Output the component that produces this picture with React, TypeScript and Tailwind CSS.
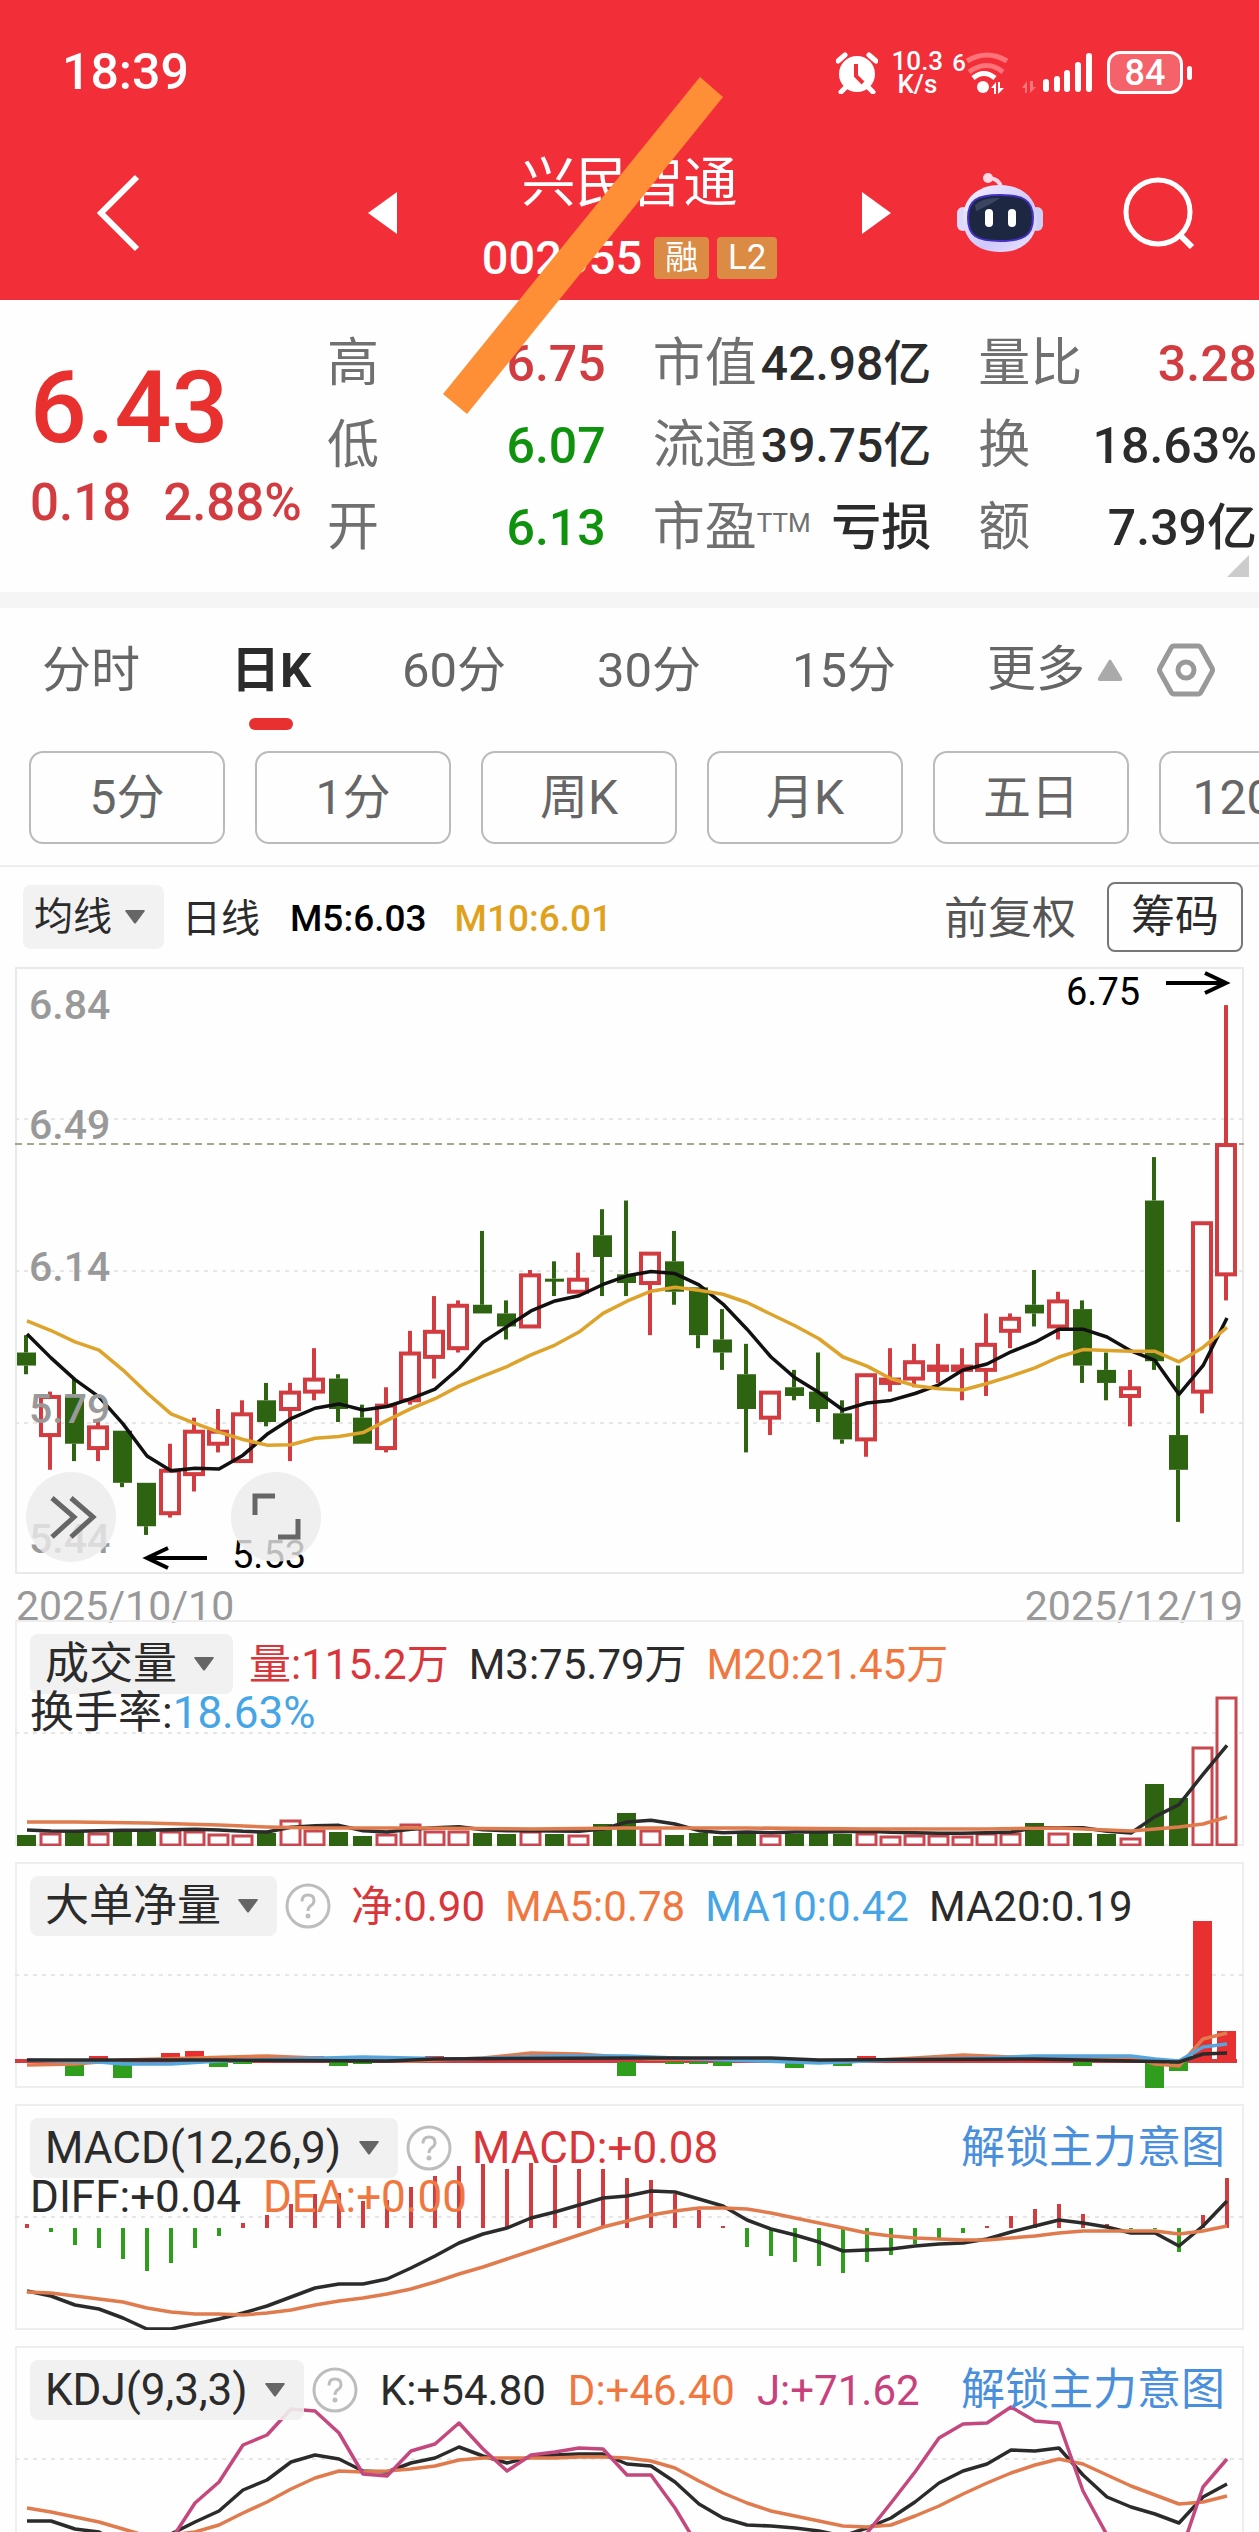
import React from 'react';

// [open, close, high, low]
const candles: number[][] = [
  [5.95, 5.92, 5.99, 5.9], [5.76, 5.85, 5.86, 5.68], [5.85, 5.74, 5.89, 5.7], [5.73, 5.78, 5.79, 5.7],
  [5.77, 5.65, 5.77, 5.64], [5.65, 5.55, 5.65, 5.53], [5.58, 5.68, 5.74, 5.57], [5.67, 5.77, 5.8, 5.63],
  [5.74, 5.77, 5.82, 5.72], [5.7, 5.81, 5.84, 5.7], [5.84, 5.79, 5.88, 5.78], [5.82, 5.86, 5.88, 5.7],
  [5.86, 5.89, 5.96, 5.84], [5.89, 5.82, 5.9, 5.79], [5.8, 5.74, 5.83, 5.74], [5.73, 5.83, 5.87, 5.72],
  [5.84, 5.95, 6.0, 5.83], [5.94, 6.0, 6.08, 5.89], [5.96, 6.06, 6.07, 5.95], [6.06, 6.04, 6.23, 6.04],
  [6.04, 6.01, 6.07, 5.98], [6.01, 6.13, 6.14, 6.01], [6.12, 6.115, 6.16, 6.08], [6.09, 6.12, 6.18, 6.09],
  [6.22, 6.17, 6.28, 6.08], [6.13, 6.11, 6.3, 6.08], [6.11, 6.18, 6.18, 5.99], [6.16, 6.09, 6.23, 6.06],
  [6.1, 5.99, 6.1, 5.96], [5.98, 5.95, 6.05, 5.91], [5.9, 5.82, 5.97, 5.72], [5.8, 5.86, 5.86, 5.76],
  [5.87, 5.85, 5.91, 5.84], [5.86, 5.82, 5.95, 5.79], [5.81, 5.75, 5.84, 5.74], [5.75, 5.9, 5.9, 5.71],
  [5.88, 5.89, 5.96, 5.86], [5.89, 5.93, 5.97, 5.87], [5.91, 5.92, 5.97, 5.88], [5.91, 5.92, 5.96, 5.84],
  [5.91, 5.97, 6.04, 5.85], [6.0, 6.03, 6.04, 5.96], [6.06, 6.04, 6.14, 6.01], [6.01, 6.07, 6.09, 5.98],
  [6.05, 5.92, 6.07, 5.88], [5.91, 5.88, 5.95, 5.84], [5.85, 5.87, 5.91, 5.78], [6.3, 5.93, 6.4, 5.91],
  [5.76, 5.68, 5.92, 5.56], [5.86, 6.25, 6.25, 5.81], [6.13, 6.43, 6.75, 6.07],
];

const volumes = [
  11, 13, 14, 13, 14, 14, 15, 15, 12, 11, 13, 26, 16, 14, 10, 12, 22, 15, 15, 13, 12, 15, 12, 11, 22, 33,
  16, 11, 13, 10, 13, 11, 12, 13, 12, 13, 10, 11, 11, 10, 13, 13, 23, 13, 13, 12, 8, 62, 48, 99, 149,
];

const volumeM20: number[][] = [
  [0, 202], [2, 202], [5, 203], [8, 205], [10, 207], [12, 208], [16, 208], [21, 209], [25, 208], [30, 208],
  [35, 209], [40, 209], [43, 208], [46, 211], [47, 209], [48, 207], [49, 204], [50, 197],
];

// index -> net amount, only the days that have a visible bar
const netBars: number[][] = [
  [2, -14], [3, 6], [4, -16], [6, 9], [7, 11], [8, -5], [9, -2], [12, 6], [13, -4], [14, -2], [17, 6],
  [25, -14], [27, -2], [28, -2], [29, -4], [32, -6], [33, -2], [34, -4], [35, 6], [42, 7], [44, -4],
  [47, -26], [48, -9], [49, 141], [50, 31],
];
const netMa5: number[][] = [
  [0, 203], [2, 202], [4, 198], [7, 196], [10, 194], [13, 197], [16, 199], [19, 196], [21, 191], [23, 192],
  [26, 197], [30, 197], [34, 200], [37, 196], [39, 193], [41, 195], [43, 196], [46, 195], [47, 202], [48, 204],
  [49, 177], [50, 171],
];
const netMa10: number[][] = [
  [0, 198], [3, 200], [4, 202], [6, 202], [8, 199], [14, 195], [18, 197], [22, 194], [25, 194], [28, 197],
  [33, 201], [36, 198], [40, 196], [42, 194], [46, 194], [47, 197], [48, 199], [49, 185], [50, 182],
];
const netMa20: number[][] = [
  [0, 198], [8, 198], [15, 199], [17, 197], [25, 196], [31, 196], [33, 198], [42, 197], [48, 200], [49, 192], [50, 191],
];

const macd = [
  4, -4, -17, -20, -31, -43, -35, -20, -8, 5, 13, 24, 34, 35, 27, 28, 41, 52, 62, 64, 59, 65, 63, 59, 59, 50,
  48, 34, 18, 2, -19, -28, -34, -38, -45, -34, -27, -16, -10, -5, 2, 12, 19, 24, 14, 4, -1, -1, -24, 13, 50,
];
const diff = [
  187, 192, 201, 205, 214, 225, 225, 220, 215, 209, 202, 193, 184, 180, 180, 175, 164, 152, 139, 130, 124, 114,
  108, 101, 94, 92, 87, 88, 95, 102, 116, 125, 131, 138, 147, 146, 145, 142, 140, 139, 135, 128, 122, 116, 119,
  123, 129, 129, 142, 122, 97,
];
const dea = [
  188, 189, 192, 195, 198, 204, 208, 210, 210, 211, 209, 206, 201, 197, 194, 190, 185, 178, 170, 163, 155, 147,
  139, 131, 123, 117, 111, 107, 104, 104, 105, 109, 114, 119, 124, 129, 132, 134, 135, 136, 136, 134, 132, 129,
  127, 127, 127, 127, 130, 127, 122,
];

const kLine = [
  175, 175, 183, 186, 200, 205, 188, 176, 165, 144, 134, 116, 109, 113, 125, 126, 117, 112, 101, 110, 117, 111,
  109, 108, 108, 118, 120, 136, 158, 172, 179, 180, 182, 185, 190, 182, 172, 156, 137, 125, 118, 104, 105, 102,
  129, 151, 161, 168, 177, 151, 138,
];
const dLine = [
  162, 166, 171, 176, 183, 190, 189, 186, 179, 167, 156, 143, 132, 125, 126, 125, 123, 120, 114, 112, 112, 112,
  112, 111, 111, 112, 115, 122, 135, 147, 157, 165, 170, 175, 180, 181, 179, 170, 160, 148, 137, 127, 119, 113,
  118, 129, 140, 149, 158, 156, 150,
];
const jLine = [
  215, 215, 225, 235, 245, 225, 194, 157, 136, 99, 89, 63, 65, 87, 128, 130, 105, 98, 77, 103, 125, 109, 106,
  102, 103, 129, 129, 162, 202, 220, 225, 225, 225, 220, 215, 187, 157, 126, 92, 78, 77, 61, 75, 77, 145, 189,
  205, 215, 212, 141, 113,
];

const DARK_GREEN = '#2e6411';
const GREEN = '#2f9e1c';
const RED = '#e83030';
const CANDLE_RED = '#d23c40';
const ORANGE = '#e07b4e';
const BLACK = '#2b2b2b';

const xAt = (i: number) => 11 + i * 24;
const priceY = (p: number) => (6.84 - p) * 434.3;

const average = (values: number[], n: number, head: number[]) =>
  values.map((_, i) =>
    i < head.length ? head[i] : values.slice(i - n + 1, i + 1).reduce((a, b) => a + b, 0) / n
  );

const closes = candles.map((c) => c[1]);
const ma5 = average(closes, 5, [5.995, 5.94, 5.89, 5.85]);
const ma10 = average(closes, 10, [6.025, 6.003, 5.977, 5.958, 5.912, 5.859, 5.811, 5.789, 5.769]);
const volumeM3 = average(volumes, 3, [14, 13]);

function Line({ ys, points, color }: { ys?: number[]; points?: number[][]; color: string }) {
  const list = points || (ys || []).map((y, i) => [i, y]);
  return (
    <polyline
      points={list.map(([i, y]) => `${xAt(i) + 1},${y}`).join(' ')}
      fill="none"
      stroke={color}
      strokeWidth="3.500"
      strokeLinejoin="round"
    />
  );
}

function GridLine({ y }: { y: number }) {
  return <line x1="0" x2="1229" y1={y} y2={y} stroke="#e6e6e6" strokeWidth="2" strokeDasharray="4 5" />;
}

function Caret() {
  return (
    <svg width="22" height="16" viewBox="0 0 22 16" className="pointer-events-none -ml-[40px] mr-[18px] shrink-0" aria-hidden="true">
      <path d="M2 1h18q1.500 0 .5 1.500L12 14q-1 1-2 0L1.500 2.500Q.5 1 2 1z" fill="#666" />
    </svg>
  );
}

function IndicatorSelect({ name }: { name: string }) {
  return (
    <label className="flex h-[60px] items-center rounded-lg bg-[#f0f0f0]/90">
      <select aria-label={name} className="h-[60px] appearance-none bg-transparent pl-[15px] pr-[56px] text-[44px] leading-[60px] text-[#2b2b2b]">
        <option>{name}</option>
      </select>
      <Caret />
    </label>
  );
}

function Help() {
  return (
    <button type="button" aria-label="说明" className="ml-2 size-[46px] shrink-0">
      <svg viewBox="0 0 46 46" fill="none" stroke="#bdbdbd" strokeWidth="3">
        <circle cx="23" cy="23" r="21" />
        <path d="M17 18.500q0-6.500 6-6.500t6 5.500q0 3-3 5t-3 5.500" />
        <circle cx="23" cy="33" r="1" fill="#bdbdbd" />
      </svg>
    </button>
  );
}

function UnlockLink() {
  return (
    <a href="#unlock" className="ml-auto text-[44px] text-[#4a8fdc]">
      解锁主力意图
    </a>
  );
}

function Panel({ children, legend, second, height }: { children: React.ReactNode; legend: React.ReactNode; second?: React.ReactNode; height: number }) {
  return (
    <section className={`relative mx-[15px] border-x-2 border-t-2 border-[#eee] ${height > 200 ? 'border-b-2' : ''}`}>
      <svg viewBox={`0 0 1229 ${height}`} className="-mx-[2px] -my-[2px] block w-[calc(100%+4px)]">
        {children}
      </svg>
      <div className="absolute inset-x-0 top-[12px] pl-[13px] pr-[17px]">
        <div className="flex h-[60px] items-center whitespace-nowrap text-[42px]">{legend}</div>
        {second && <div className="flex h-[38px] items-center gap-[22px] whitespace-nowrap text-[44px] leading-none">{second}</div>}
      </div>
    </section>
  );
}

function Stat({ label, value, color = 'text-[#2b2b2b]', size = 'text-[50px]' }: { label: React.ReactNode; value: string; color?: string; size?: string }) {
  return (
    <div className="flex h-[82px] items-center justify-between whitespace-nowrap">
      <dt className="text-[52px] text-[#707070]">{label}</dt>
      <dd className={`font-medium ${size} ${color}`}>{value}</dd>
    </div>
  );
}

function StatusBar() {
  return (
    <div className="flex h-[145px] items-center pl-[62px] pr-[67px]">
      <span className="text-[50px] font-medium">18:39</span>
      <div className="ml-auto flex items-center">
        <svg width="42" height="42" viewBox="0 0 42 42" aria-hidden="true">
          <circle cx="21" cy="22" r="18" fill="#fff" />
          <path d="M2 9 9 3M33 3l7 6M5 40l6-6M37 40l-6-6" stroke="#fff" strokeWidth="5" strokeLinecap="round" />
          <path d="M20 12v12l7 7" fill="none" stroke="#f22e38" strokeWidth="4" />
        </svg>
        <span className="ml-3 w-[54px] text-center text-[26px] font-medium leading-[23px]">
          10.3 K/s
        </span>
        <span className="mb-5 ml-2 text-[24px] font-medium leading-none">6</span>
        <svg width="44" height="42" viewBox="0 0 44 42" fill="none" strokeWidth="5" className="-ml-px" aria-hidden="true">
          <path d="M2 9Q22-3 42 9" stroke="#ff7478" />
          <path d="M4 20q18-13 34 0" stroke="#ff7478" />
          <path d="M8 26q11-9 22 0" stroke="#fff" />
          <circle cx="18" cy="35" r="6" fill="#fff" />
          <path d="m26 36 5-6v12h-2v-6zM33 30v12l6-6h-4v-6z" fill="#fff" />
        </svg>
        <svg width="72" height="42" viewBox="0 0 72 42" className="ml-[12px]" aria-hidden="true">
          <path d="m1 36 5-7v12H4v-5zM9 29v12l6-6h-3v-6z" fill="#ff7478" />
          <path d="M25 30v7M36 27v10M46 21v16M57 13v24M68 4v33" stroke="#fff" strokeWidth="6" strokeLinecap="round" />
        </svg>
        <div className="ml-[14px] flex h-[43px] w-[76px] items-center justify-center rounded-[13px] border-3 border-white bg-white/25 text-[36px] font-medium leading-none">
          84
        </div>
        <div className="ml-1 h-[14px] w-[5px] rounded-full bg-white" />
      </div>
    </div>
  );
}

function Robot() {
  return (
    <svg width="86" height="80" viewBox="0 0 86 80">
      <defs>
        <linearGradient id="shell" x1="0" y1="0" x2="1" y2="1">
          <stop offset="0" stopColor="#f4f2ff" />
          <stop offset=".6" stopColor="#cfc8fb" />
          <stop offset="1" stopColor="#e9e6ff" />
        </linearGradient>
      </defs>
      <path d="M44 15q-1-9-12-10" fill="none" stroke="#ffd3e2" strokeWidth="4" />
      <circle cx="31" cy="5" r="5" fill="#ffdbe6" />
      <rect x="0" y="34" width="12" height="24" rx="6" fill="#dcd9fb" />
      <rect x="74" y="34" width="12" height="24" rx="6" fill="#cdd0f5" />
      <path d="M43 12c22 0 37 13 37 33S67 79 43 79 6 65 6 45s15-33 37-33z" fill="url(#shell)" />
      <path d="M43 22c23 0 33 5 33 23s-10 23-33 23-32-5-32-23 9-23 32-23z" fill="#1d2742" stroke="#4431c4" strokeWidth="2" />
      <path d="M18 32q8-8 25-7-8 6-24 13z" fill="#3b4560" />
      <rect x="28" y="36" width="8" height="18" rx="4" fill="#fff" />
      <rect x="51" y="36" width="8" height="18" rx="4" fill="#fff" />
    </svg>
  );
}

function Header() {
  return (
    <header className="h-[300px] bg-[#f22e38] text-white">
      <StatusBar />
      <nav className="grid h-[136px] grid-cols-[1fr_523px_1fr] grid-rows-[136px] items-center">
        <button type="button" aria-label="返回" className="ml-[95px] w-[46px]">
          <svg width="46" height="78" viewBox="0 0 46 78" fill="none" stroke="#fff" strokeWidth="6">
            <path d="M42 3 6 39l36 36" />
          </svg>
        </button>
        <div className="flex items-center justify-between">
          <button type="button" aria-label="上一只">
            <svg width="29" height="42" viewBox="0 0 29 42"><path d="M29 0v42L0 21z" fill="#fff" /></svg>
          </button>
          <div className="pt-4 text-center">
            <h1 className="text-[54px] leading-[74px]">兴民智通</h1>
            <div className="flex items-center gap-2 text-[47px] leading-[74px]">
              <span className="mr-1 font-medium">002355</span>
              <span className="flex h-[42px] w-[55px] items-center justify-center rounded bg-[#dc8b45] text-[33px]">融</span>
              <span className="flex h-[42px] w-[60px] items-center justify-center rounded bg-[#dc8b45] text-[35px]">L2</span>
            </div>
          </div>
          <button type="button" aria-label="下一只">
            <svg width="29" height="42" viewBox="0 0 29 42"><path d="M0 0v42l29-21z" fill="#fff" /></svg>
          </button>
        </div>
        <div className="flex items-center justify-end gap-[80px] pr-[64px]">
          <button type="button" aria-label="助手"><Robot /></button>
          <button type="button" aria-label="搜索">
            <svg width="72" height="72" viewBox="0 0 72 72" fill="none" stroke="#fff" strokeWidth="5">
              <circle cx="35" cy="35" r="32" />
              <path d="m57 58 12 12" strokeWidth="6" />
            </svg>
          </button>
        </div>
      </nav>
      {/* marker stroke across the title */}
      <svg width="280" height="337" viewBox="0 0 280 337" className="pointer-events-none absolute left-[443px] top-[77px] z-10" aria-hidden="true">
        <path d="M257 0 280 20 24 337 0 317z" fill="#ff8f36" />
      </svg>
    </header>
  );
}

function Quote() {
  return (
    <section className="relative grid h-[292px] grid-cols-[250px_1fr_1fr_1fr] items-start gap-x-[47px] pl-[30px] pr-[2px] pt-[23px]">
      <div className="whitespace-nowrap pt-[35px] font-medium">
        <p className="text-[100px] leading-[100px] text-[#e8302f]">6.43</p>
        <p className="flex gap-[32px] text-[51px] leading-[90px] text-[#d23c40]">
          <span>0.18</span>
          <span>2.88%</span>
        </p>
      </div>
      <dl>
        <Stat label="高" value="6.75" color="text-[#d23c40]" />
        <Stat label="低" value="6.07" color="text-[#0f930f]" />
        <Stat label="开" value="6.13" color="text-[#0f930f]" />
      </dl>
      <dl>
        <Stat label="市值" value="42.98亿" size="text-[48px]" />
        <Stat label="流通" value="39.75亿" size="text-[48px]" />
        <Stat label={<>市盈<sup className="text-[26px]">TTM</sup></>} value="亏损" />
      </dl>
      <dl>
        <Stat label="量比" value="3.28" color="text-[#d23c40]" />
        <Stat label="换" value="18.63%" />
        <Stat label="额" value="7.39亿" />
      </dl>
      <svg width="22" height="22" viewBox="0 0 22 22" className="absolute bottom-[15px] right-[10px]" aria-hidden="true">
        <path d="M22 0v22H0z" fill="#ccc" />
      </svg>
    </section>
  );
}

function Periods() {
  const tabs = ['分时', '日K', '60分', '30分', '15分'];
  const chips = ['5分', '1分', '周K', '月K', '五日', '120分'];
  return (
    <section className="border-b-2 border-[#eee]">
      <div className="flex h-[143px] items-start justify-between pl-[42px] pr-[44px] text-[49px] leading-[126px] text-[#666]">
        {tabs.map((t) => (
          <button key={t} type="button" className={t === '日K' ? 'relative font-bold text-[#2b2b2b]' : ''}>
            {t}
            {t === '日K' && <span className="absolute left-1/2 top-[110px] h-3 w-11 -translate-x-1/2 rounded-full bg-[#e83030]" />}
          </button>
        ))}
        <div className="flex h-[124px] items-center">
          <button type="button" className="flex items-center gap-3">
            更多
            <svg width="26" height="22" viewBox="0 0 26 22"><path d="M12 1q1-1 2 0l11 18q1 3-2 3H3q-3 0-2-3z" fill="#aaa" /></svg>
          </button>
          <button type="button" aria-label="设置" className="ml-[34px]">
            <svg width="58" height="54" viewBox="0 0 58 54" fill="none" stroke="#999" strokeWidth="5" strokeLinejoin="round">
              <path d="M17 3h24q2 0 3 2l11 20q1 2 0 4L44 49q-1 2-3 2H17q-2 0-3-2L3 29q-1-2 0-4L14 5q1-2 3-2z" />
              <circle cx="29" cy="27" r="8" />
            </svg>
          </button>
        </div>
      </div>
      <div className="flex gap-[30px] overflow-hidden pb-[21px] pl-[29px]">
        {chips.map((c) => (
          <button key={c} type="button" className="h-[93px] w-[196px] shrink-0 rounded-[14px] border-2 border-[#bbb] text-[48px] text-[#666]">
            {c}
          </button>
        ))}
      </div>
    </section>
  );
}

function PriceChart() {
  return (
    <section>
      <div className="flex h-[100px] items-center whitespace-nowrap pl-[23px] pr-4 text-[37px] font-medium">
        <label className="flex h-[64px] items-center rounded-lg bg-[#f2f2f2] font-normal">
          <select aria-label="均线" className="appearance-none bg-transparent pl-[11px] pr-[51px] text-[39px] leading-[60px] text-[#2b2b2b]">
            <option>均线</option>
          </select>
          <Caret />
        </label>
        <span className="ml-[18px] pt-1 text-[39px] font-normal text-[#2b2b2b]">日线</span>
        <span className="ml-[30px] pt-1 text-black">M5:6.03</span>
        <span className="ml-[28px] pt-1 text-[#e0a21c]">M10:6.01</span>
        <button type="button" className="ml-auto pt-1 text-[44px] font-normal text-[#555]">前复权</button>
        <button type="button" className="ml-[31px] h-[70px] w-[136px] rounded-lg border-2 border-[#777] text-[44px] font-normal leading-none text-[#2b2b2b]">筹码</button>
      </div>
      <div className="relative mx-[15px]">
        <svg viewBox="0 0 1229 607" className="block w-full font-medium">
          <rect x="1" y="1" width="1227" height="605" fill="none" stroke="#e9e9e9" strokeWidth="2" />
          {[6.49, 6.14, 5.79].map((p) => <GridLine key={p} y={priceY(p)} />)}
          <line x1="0" x2="1229" y1="177" y2="177" stroke="#a8a68c" strokeWidth="2" strokeDasharray="7 5" />
          {candles.map(([open, close, high, low], i) => {
            const up = close > open;
            const color = up ? CANDLE_RED : DARK_GREEN;
            const top = priceY(Math.max(open, close)) - 1;
            const bottom = priceY(Math.min(open, close)) - 1;
            return (
              <g key={i} stroke={color}>
                <line x1={xAt(i)} x2={xAt(i)} y1={priceY(high) - 1} y2={top} strokeWidth="4" />
                <line x1={xAt(i)} x2={xAt(i)} y1={bottom} y2={priceY(low) - 1} strokeWidth="4" />
                {up
                  ? <rect x={xAt(i) - 9} y={top + 1} width="18" height={Math.max(bottom - top - 1, 2)} fill="#fff" strokeWidth="4" />
                  : <rect x={xAt(i) - 9} y={top} width="19" height={Math.max(bottom - top, 3)} fill={color} stroke="none" />}
              </g>
            );
          })}
          <Line ys={ma5.map(priceY)} color="#111" />
          <Line ys={ma10.map(priceY)} color="#dea32a" />
          <g fontSize="41" fill="#999">
            <text x="14" y="52">6.84</text>
            <text x="14" y="172">6.49</text>
            <text x="14" y="314">6.14</text>
            <text x="14" y="456">5.79</text>
            <text x="14" y="586">5.44</text>
          </g>
          <g fontSize="38" fontWeight="400" fill="#000">
            <text x="1051" y="38">6.75</text>
            <text x="217" y="601">5.53</text>
          </g>
          <path d="M1151 16h60M1190 6l21 10-21 10M192 591h-60M153 581l-21 10 21 10" fill="none" stroke="#000" strokeWidth="4" />
        </svg>
        <div className="absolute bottom-[12px] left-[11px] flex gap-[115px]">
          <button type="button" aria-label="展开" className="size-[90px] rounded-full bg-[#ebebeb]/80">
            <svg viewBox="0 0 90 90" fill="none" stroke="#666" strokeWidth="5"><path d="m26 26 22 19-22 20M45 26l22 19-22 20" /></svg>
          </button>
          <button type="button" aria-label="全屏" className="size-[90px] rounded-full bg-[#ebebeb]/80">
            <svg viewBox="0 0 90 90" fill="none" stroke="#666" strokeWidth="5"><path d="M24 43V24h20M67 47v18H47" /></svg>
          </button>
        </div>
      </div>
      <div className="flex h-[46px] justify-between px-[16px] pt-[12px] text-[41px] leading-[40px] text-[#999]">
        <span>2025/10/10</span>
        <span>2025/12/19</span>
      </div>
    </section>
  );
}

function VolumePanel() {
  return (
    <Panel
      height={226}
      legend={
        <>
          <IndicatorSelect name="成交量" />
          <span className="ml-[16px] text-[#d8363a]">量:115.2万</span>
          <span className="ml-[20px] text-[#2b2b2b]">M3:75.79万</span>
          <span className="ml-[20px] text-[#f07840]">M20:21.45万</span>
        </>
      }
      second={<span className="text-[#2b2b2b]">换手率:<span className="text-[#45a5e5]">18.63%</span></span>}
    >
      <GridLine y={113} />
      {volumes.map((v, i) =>
        candles[i][1] > candles[i][0]
          ? <rect key={i} x={xAt(i) - 9} y={227 - v} width="19" height={v - 2} fill="#fff" stroke="#c9474f" strokeWidth="3" />
          : <rect key={i} x={xAt(i) - 9} y={226 - v} width="19" height={v} fill={DARK_GREEN} />
      )}
      <Line ys={volumeM3.map((v) => 224 - v)} color={BLACK} />
      <Line points={volumeM20} color={ORANGE} />
    </Panel>
  );
}

function NetPanel() {
  return (
    <Panel
      height={226}
      legend={
        <>
          <IndicatorSelect name="大单净量" />
          <Help />
          <span className="ml-[20px] text-[#d8363a]">净:0.90</span>
          <span className="ml-[20px] text-[#f07840]">MA5:0.78</span>
          <span className="ml-[20px] text-[#45a5e5]">MA10:0.42</span>
          <span className="ml-[20px] text-[#2b2b2b]">MA20:0.19</span>
        </>
      }
    >
      <GridLine y={113} />
      <line x1="0" x2="1222" y1="199" y2="199" stroke={CANDLE_RED} strokeWidth="4" />
      {netBars.map(([i, v]) => (
        <rect key={i} x={xAt(i) - 9} y={v > 0 ? 200 - v : 200} width="19" height={Math.abs(v)} fill={v > 0 ? RED : GREEN} />
      ))}
      <Line points={netMa5} color={ORANGE} />
      <Line points={netMa10} color="#55a5de" />
      <Line points={netMa20} color={BLACK} />
    </Panel>
  );
}

function MacdPanel() {
  return (
    <Panel
      height={226}
      legend={
        <>
          <IndicatorSelect name="MACD(12,26,9)" />
          <Help />
          <span className="ml-[20px] text-[44px] text-[#d8363a]">MACD:+0.08</span>
          <UnlockLink />
        </>
      }
      second={
        <>
          <span className="text-[#2b2b2b]">DIFF:+0.04</span>
          <span className="text-[#f07840]">DEA:+0.00</span>
        </>
      }
    >
      <GridLine y={113} />
      {macd.map((v, i) => (
        <line key={i} x1={xAt(i) + 1} x2={xAt(i) + 1} y1="124" y2={124 - v} stroke={v > 0 ? CANDLE_RED : GREEN} strokeWidth="4" />
      ))}
      <Line ys={diff} color={BLACK} />
      <Line ys={dea} color={ORANGE} />
    </Panel>
  );
}

function KdjPanel() {
  return (
    <Panel
      height={188}
      legend={
        <>
          <IndicatorSelect name="KDJ(9,3,3)" />
          <Help />
          <span className="ml-[22px] text-[#2b2b2b]">K:+54.80</span>
          <span className="ml-[22px] text-[#f07840]">D:+46.40</span>
          <span className="ml-[22px] text-[#c9417c]">J:+71.62</span>
          <UnlockLink />
        </>
      }
    >
      <GridLine y={113} />
      <Line ys={kLine} color={BLACK} />
      <Line ys={dLine} color={ORANGE} />
      <Line ys={jLine} color="#c4487e" />
    </Panel>
  );
}

export default function App() {
  return (
    <div className="relative w-full overflow-hidden bg-[#fefefe] font-['Roboto','Noto_Sans_CJK_SC',sans-serif]">
      <Header />
      <Quote />
      <div className="h-4 bg-[#f5f5f5]" />
      <Periods />
      <PriceChart />
      <main className="flex flex-col gap-4">
        <VolumePanel />
        <NetPanel />
        <MacdPanel />
        <KdjPanel />
      </main>
    </div>
  );
}
